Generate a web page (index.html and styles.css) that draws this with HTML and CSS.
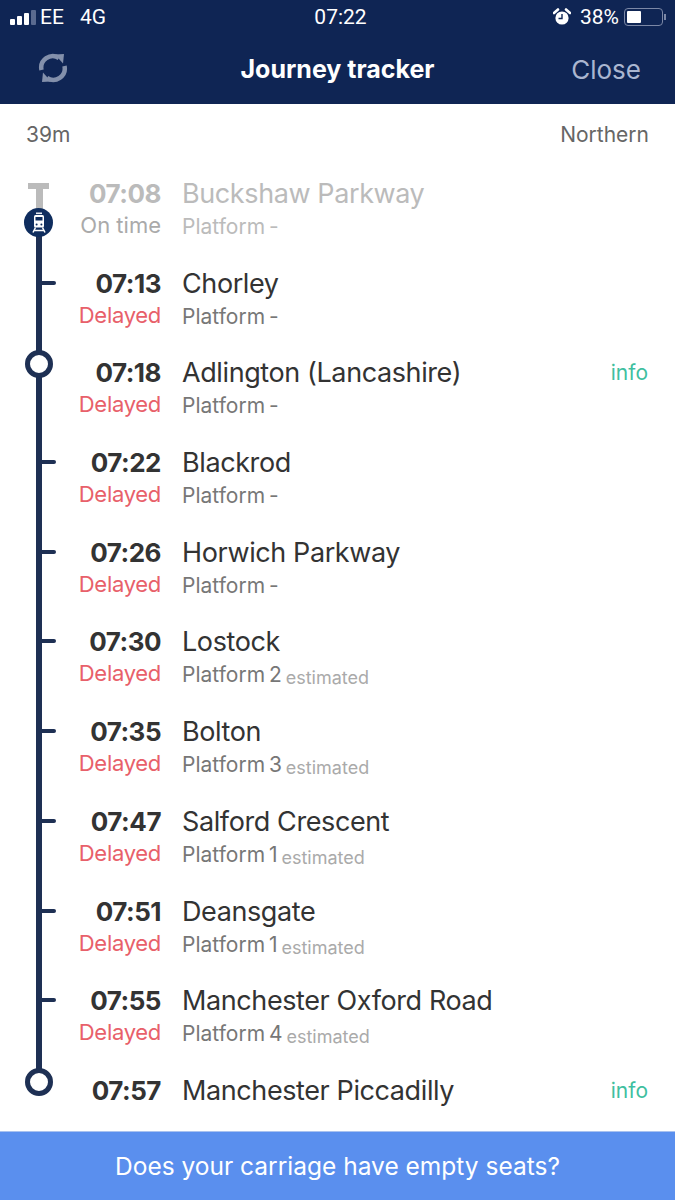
FILE: index.html
```html
<!DOCTYPE html>
<html lang="en">
<head>
    <meta charset="UTF-8">
    <meta name="viewport" content="width=device-width, initial-scale=1.0">
    <title>Journey tracker</title>
    <link rel="stylesheet" href="styles.css">
</head>
<body>
    <div class="app">
        <header class="top">
            <div class="status-bar">
                <div class="status-left">
                    <span class="signal"><i></i><i></i><i></i><i class="off"></i></span>
                    <span class="carrier">EE</span>
                    <span class="network">4G</span>
                </div>
                <div class="clock">07:22</div>
                <div class="status-right">
                    <svg class="alarm" viewBox="0 0 18 18" width="18" height="18">
                        <circle cx="9" cy="10" r="6.6" fill="#fff"/>
                        <path d="M1 5 L5 1.5 M13 1.5 L17 5" stroke="#fff" stroke-width="2.6" stroke-linecap="round"/>
                        <path d="M9 6 V10.5 H5.5" stroke="#0f2554" stroke-width="1.4" fill="none"/>
                    </svg>
                    <span class="percent">38%</span>
                    <span class="battery"><span class="battery-fill"></span></span>
                    <span class="battery-tip"></span>
                </div>
            </div>
            <div class="nav-bar">
                <svg class="refresh" viewBox="0 0 30 30" width="30" height="30">
                    <path d="M3.5 17 A11.5 11.5 0 0 1 21 5" fill="none" stroke="#8390ab" stroke-width="4.5"/>
                    <path d="M17 1.5 L26 1 L25 10.5 Z" fill="#8390ab"/>
                    <path d="M26.5 13 A11.5 11.5 0 0 1 9 25" fill="none" stroke="#8390ab" stroke-width="4.5"/>
                    <path d="M13 28.5 L4 29 L5 19.5 Z" fill="#8390ab"/>
                </svg>
                <h1 class="nav-title">Journey tracker</h1>
                <span class="nav-close">Close</span>
            </div>
        </header>

        <div class="meta">
            <span>39m</span>
            <span>Northern</span>
        </div>

        <ul class="stops">
            <li class="stop stop-passed">
                <div class="rail rail-start">
                    <span class="rail-cap"></span>
                    <span class="rail-train">
                        <svg viewBox="0 0 14 22" width="14" height="22">
                            <rect x="4" y="0.5" width="6" height="1.6" fill="#e9ecf2"/>
                            <rect x="2" y="3" width="10" height="12.5" rx="1.5" fill="#fff"/>
                            <rect x="3.5" y="5" width="7" height="3.5" fill="#0f2d5e"/>
                            <circle cx="4.6" cy="12.5" r="1" fill="#0f2d5e"/>
                            <circle cx="9.4" cy="12.5" r="1" fill="#0f2d5e"/>
                            <path d="M3.5 15.5 L1 20.5 M10.5 15.5 L13 20.5 M2.5 18.5 H11.5" stroke="#fff" stroke-width="1.5" fill="none"/>
                        </svg>
                    </span>
                </div>
                <div class="time">07:08</div>
                <div class="station">Buckshaw Parkway</div>
                <div class="state">On time</div>
                <div class="platform">Platform -</div>
            </li>
            <li class="stop">
                <div class="rail rail-tick"></div>
                <div class="time">07:13</div>
                <div class="station">Chorley</div>
                <div class="state late">Delayed</div>
                <div class="platform">Platform -</div>
            </li>
            <li class="stop">
                <div class="rail rail-ring"></div>
                <div class="time">07:18</div>
                <div class="station">Adlington (Lancashire)</div>
                <div class="info">info</div>
                <div class="state late">Delayed</div>
                <div class="platform">Platform -</div>
            </li>
            <li class="stop">
                <div class="rail rail-tick"></div>
                <div class="time">07:22</div>
                <div class="station">Blackrod</div>
                <div class="state late">Delayed</div>
                <div class="platform">Platform -</div>
            </li>
            <li class="stop">
                <div class="rail rail-tick"></div>
                <div class="time">07:26</div>
                <div class="station">Horwich Parkway</div>
                <div class="state late">Delayed</div>
                <div class="platform">Platform -</div>
            </li>
            <li class="stop">
                <div class="rail rail-tick"></div>
                <div class="time">07:30</div>
                <div class="station">Lostock</div>
                <div class="state late">Delayed</div>
                <div class="platform">Platform 2 <small>estimated</small></div>
            </li>
            <li class="stop">
                <div class="rail rail-tick"></div>
                <div class="time">07:35</div>
                <div class="station">Bolton</div>
                <div class="state late">Delayed</div>
                <div class="platform">Platform 3 <small>estimated</small></div>
            </li>
            <li class="stop">
                <div class="rail rail-tick"></div>
                <div class="time">07:47</div>
                <div class="station">Salford Crescent</div>
                <div class="state late">Delayed</div>
                <div class="platform">Platform 1 <small>estimated</small></div>
            </li>
            <li class="stop">
                <div class="rail rail-tick"></div>
                <div class="time">07:51</div>
                <div class="station">Deansgate</div>
                <div class="state late">Delayed</div>
                <div class="platform">Platform 1 <small>estimated</small></div>
            </li>
            <li class="stop">
                <div class="rail rail-tick"></div>
                <div class="time">07:55</div>
                <div class="station">Manchester Oxford Road</div>
                <div class="state late">Delayed</div>
                <div class="platform">Platform 4 <small>estimated</small></div>
            </li>
            <li class="stop stop-last">
                <div class="rail rail-ring rail-end"></div>
                <div class="time">07:57</div>
                <div class="station">Manchester Piccadilly</div>
                <div class="info">info</div>
            </li>
        </ul>

        <div class="seats-banner">Does your carriage have empty seats?</div>
    </div>
</body>
</html>
```

FILE: styles.css
```css
*, *::before, *::after {
    box-sizing: border-box;
}
body {
    margin: 0;
    font-family: Inter, "Liberation Sans", sans-serif;
    color: #333;
    background: #fff;
}
.app {
    display: flex;
    flex-direction: column;
    width: 675px;
    height: 1200px;
    overflow: hidden;
}

/* top bars */
.top {
    height: 104px;
    background: #0f2554;
    color: #fff;
}
.status-bar {
    display: grid;
    grid-template-columns: 1fr auto 1fr;
    align-items: center;
    height: 34px;
    font-family: Roboto, sans-serif;
    font-size: 21px;
}
.status-left {
    display: flex;
    align-items: center;
    padding-left: 10px;
}
.signal {
    display: flex;
    align-items: flex-end;
    gap: 2px;
    height: 15px;
    margin-right: 4px;
}
.signal i {
    width: 5px;
    height: 6px;
    border-radius: 1px;
    background: #fff;
}
.signal i:nth-child(2) { height: 9px; }
.signal i:nth-child(3) { height: 12px; }
.signal i.off { height: 15px; background: #5a6a8f; }
.network {
    margin-left: 16px;
}
.clock {
    padding-left: 6px;
}
.status-right {
    display: flex;
    align-items: center;
    justify-content: flex-end;
    padding-right: 9px;
}
.alarm {
    margin-right: 9px;
}
.percent {
    margin-right: 5px;
}
.battery {
    width: 39px;
    height: 18px;
    padding: 2px;
    border: 1px solid #7c88a6;
    border-radius: 4px;
}
.battery-fill {
    display: block;
    width: 14px;
    height: 12px;
    border-radius: 1px;
    background: #fff;
}
.battery-tip {
    width: 2px;
    height: 6px;
    margin-left: 1px;
    background: #7c88a6;
}
.nav-bar {
    display: grid;
    grid-template-columns: 1fr auto 1fr;
    align-items: center;
    height: 70px;
    padding: 0 34px;
}
.refresh {
    display: block;
    margin: 0 0 2px 4px;
}
.nav-title {
    margin: 0;
    font-size: 25px;
    font-weight: 700;
}
.nav-close {
    justify-self: end;
    font-size: 26px;
    color: #aab6d0;
}

/* duration and operator */
.meta {
    display: flex;
    justify-content: space-between;
    height: 73px;
    padding: 19px 26px 0;
    font-size: 21px;
    line-height: 24px;
    color: #666;
}

/* calling points */
.stops {
    flex: 1;
    margin: 0;
    padding: 0;
    list-style: none;
    overflow: hidden;
}
.stop {
    display: grid;
    grid-template-columns: 56px 105px 1fr auto;
    grid-template-rows: 33px 33px;
    height: 89.7px;
}
.stop-last {
    height: 58px;
}
.rail {
    position: relative;
    grid-row: 1 / 3;
    grid-column: 1;
    height: 89.7px;
}
.rail::before {
    content: "";
    position: absolute;
    left: 36px;
    top: 0;
    bottom: 0;
    width: 6px;
    background: #1e3054;
}
.rail-tick::after {
    content: "";
    position: absolute;
    left: 42px;
    top: 14px;
    width: 14px;
    height: 4px;
    border-radius: 0 2px 2px 0;
    background: #1e3054;
}
.rail-ring::after {
    content: "";
    position: absolute;
    left: 25px;
    top: -6px;
    width: 28px;
    height: 28px;
    border: 5px solid #1e3054;
    border-radius: 50%;
    background: #fff;
}
.rail-end::before {
    bottom: auto;
    height: 8px;
}
.rail-start::before {
    top: 45px;
}
.rail-cap {
    position: absolute;
    left: 28px;
    top: 6px;
    width: 21px;
    height: 6px;
    background: #bbb;
}
.rail-cap::after {
    content: "";
    position: absolute;
    left: 8px;
    top: 6px;
    width: 7px;
    height: 25px;
    background: #bbb;
}
.rail-train {
    position: absolute;
    left: 24px;
    top: 31px;
    display: flex;
    align-items: center;
    justify-content: center;
    width: 29px;
    height: 29px;
    border-radius: 50%;
    background: #0f2d5e;
}
.time {
    grid-column: 2;
    text-align: right;
    font-size: 26px;
    font-weight: 700;
    line-height: 33px;
    letter-spacing: -0.5px;
}
.station {
    grid-column: 3;
    padding-left: 21px;
    font-size: 27px;
    line-height: 33px;
    letter-spacing: -0.4px;
    white-space: nowrap;
}
.info {
    grid-column: 4;
    padding-right: 27px;
    font-size: 21px;
    line-height: 33px;
    color: #3fbfa0;
}
.state {
    grid-column: 2;
    text-align: right;
    font-size: 22px;
    line-height: 31px;
    color: #aaa;
}
.state.late {
    color: #e8606a;
    letter-spacing: -0.3px;
}
.platform {
    grid-column: 3 / 5;
    padding-left: 21px;
    font-size: 21px;
    line-height: 33px;
    word-spacing: -2px;
    color: #777;
}
.platform small {
    position: relative;
    top: 2px;
    font-size: 18px;
    color: #aaa;
}
.stop-passed .time,
.stop-passed .station,
.stop-passed .platform {
    color: #bbb;
}

.seats-banner {
    height: 69px;
    flex-shrink: 0;
    border-top: 1px solid #a9c2ef;
    background: #5a8fee;
    color: #fff;
    font-size: 24.5px;
    line-height: 69px;
    text-align: center;
}
```
